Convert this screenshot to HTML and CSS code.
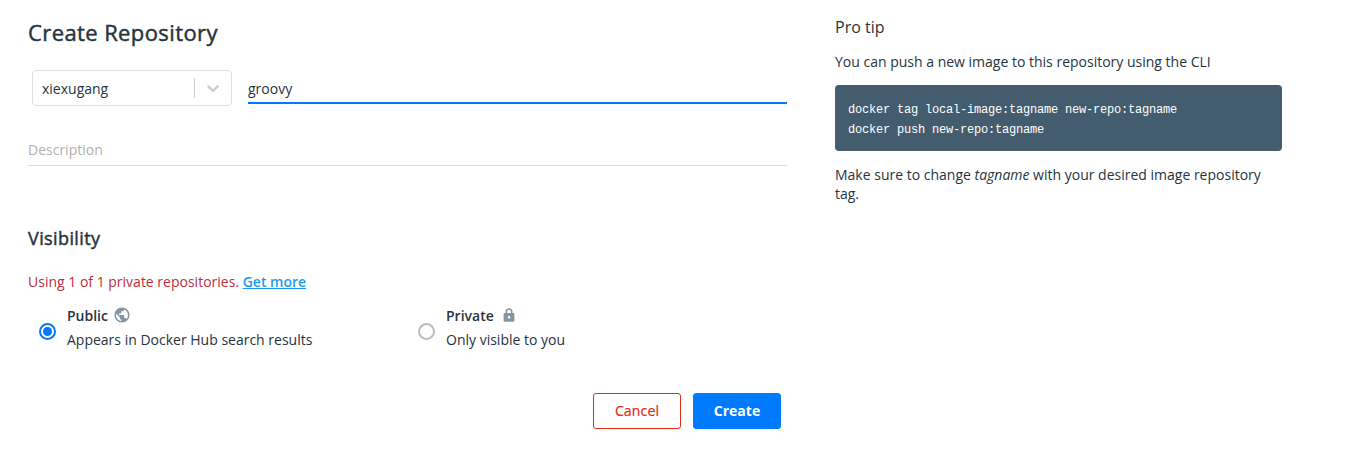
FILE: index.html
```html
<!DOCTYPE html>
<html lang="en">
<head>
<meta charset="utf-8">
<title>Create Repository</title>
<link rel="stylesheet" href="styles.css">
</head>
<body>
<div class="page">
  <main class="form">
    <h1 class="title">Create Repository</h1>
    <div class="name-row">
      <div class="select">
        <span class="select-value">xiexugang</span>
        <span class="select-divider"></span>
        <svg class="chevron" width="20" height="20" viewBox="0 0 20 20"><path fill="#ccc" d="M4.516 7.548c0.436-0.446 1.043-0.481 1.576 0l3.908 3.747 3.908-3.747c0.533-0.481 1.141-0.446 1.574 0 0.436 0.445 0.408 1.197 0 1.615-0.406 0.418-4.695 4.502-4.695 4.502-0.217 0.223-0.502 0.335-0.787 0.335s-0.57-0.112-0.789-0.335c0 0-4.287-4.084-4.695-4.502s-0.436-1.17 0-1.615z"/></svg>
      </div>
      <div class="name-field">groovy</div>
    </div>
    <div class="description">Description</div>
    <h2 class="subtitle">Visibility</h2>
    <p class="usage">Using 1 of 1 private repositories. <a class="link">Get more</a></p>
    <div class="options">
      <div class="option">
        <span class="radio radio-checked"></span>
        <div class="option-text">
          <div class="option-name">Public
            <svg class="globe" width="18" height="18" viewBox="0 0 24 24"><path fill="#8596a1" d="M12 2C6.48 2 2 6.48 2 12s4.48 10 10 10 10-4.48 10-10S17.52 2 12 2zm-1 17.93c-3.95-.49-7-3.85-7-7.93 0-.62.08-1.21.21-1.79L9 15v1c0 1.1.9 2 2 2v1.93zm6.9-2.54c-.26-.81-1-1.39-1.9-1.39h-1v-3c0-.55-.45-1-1-1H8v-2h2c.55 0 1-.45 1-1V7h2c1.1 0 2-.9 2-2v-.41c2.93 1.19 5 4.06 5 7.41 0 2.08-.8 3.97-2.1 5.39z"/></svg>
          </div>
          <div>Appears in Docker Hub search results</div>
        </div>
      </div>
      <div class="option">
        <span class="radio"></span>
        <div class="option-text">
          <div class="option-name">Private
            <svg class="lock" width="16" height="16" viewBox="0 0 16 16"><path d="M5.300 7V4.700a2.700 2.700 0 0 1 5.400 0V7" fill="none" stroke="#8596a1" stroke-width="1.600"/><path fill="#8596a1" fill-rule="evenodd" d="M3.800 6h8.400a1.200 1.200 0 0 1 1.200 1.200v6.300a1.200 1.200 0 0 1-1.200 1.200H3.800a1.200 1.200 0 0 1-1.200-1.200V7.200A1.200 1.200 0 0 1 3.800 6zM8 9a1.250 1.250 0 1 0 0 2.500A1.250 1.250 0 0 0 8 9z"/></svg>
          </div>
          <div>Only visible to you</div>
        </div>
      </div>
    </div>
    <div class="actions">
      <button class="button cancel">Cancel</button>
      <button class="button create">Create</button>
    </div>
  </main>
  <aside class="tip">
    <h3 class="tip-title">Pro tip</h3>
    <p class="tip-text">You can push a new image to this repository using the CLI</p>
    <pre class="code">docker tag local-image:tagname new-repo:tagname
docker push new-repo:tagname</pre>
    <p class="tip-text">Make sure to change <em>tagname</em> with your desired image repository tag.</p>
  </aside>
</div>
</body>
</html>
```
FILE: styles.css
```css
* { box-sizing: border-box; }
body {
  margin: 0;
  background: #fff;
  color: #27343d;
  font: 14px/20px "Open Sans", sans-serif;
}
h1, h2, h3, p, pre { margin: 0; }
.page {
  display: flex;
  gap: 48px;
  padding: 17px 0 0 28px;
}
.form { width: 759px; }
.title {
  font-size: 22px;
  line-height: 30px;
  font-weight: 400;
  letter-spacing: 0.4px;
  -webkit-text-stroke: 0.45px currentColor;
}
.name-row {
  display: flex;
  gap: 16px;
  margin-top: 23px;
  padding-left: 4px;
}
.select {
  display: flex;
  align-items: center;
  width: 200px;
  height: 36px;
  padding: 0 8px 0 9px;
  border: 1px solid #e1e2e6;
  border-radius: 4px;
}
.select-value { flex: 1; padding-top: 1px; }
.select-divider { width: 1px; height: 20px; margin-right: 8px; background: #ccc; }
.name-field {
  flex: 1;
  height: 34px;
  padding-top: 9px;
  border-bottom: 2px solid #007bff;
}
.description {
  margin-top: 28px;
  height: 32px;
  padding-top: 6px;
  color: #b1b1b1;
  border-bottom: 1px solid #dcdcdc;
}
.subtitle {
  margin-top: 60px;
  font-size: 18px;
  line-height: 24px;
  font-weight: 400;
  letter-spacing: 0.4px;
  -webkit-text-stroke: 0.45px currentColor;
}
.usage { margin-top: 22px; color: #bc2f3d; }
.link { color: #1d9bf0; font-weight: 600; text-decoration: underline; }
.options { display: flex; margin-top: 12px; padding-left: 11px; }
.option { display: flex; flex: none; width: 379px; align-items: center; gap: 11px; }
.option:last-child { width: auto; }
.option-text { line-height: 24px; }
.option-name { display: flex; align-items: center; font-weight: 600; }
.globe { margin: -2px 0 0 5px; }
.lock { margin: -3px 0 0 7px; }
.radio {
  display: flex;
  flex: none;
  width: 17px;
  height: 17px;
  margin-top: 7px;
  border: 2px solid #bdbdbd;
  border-radius: 50%;
}
.radio-checked { border-color: #007bff; }
.radio-checked::before {
  content: "";
  width: 9px;
  height: 9px;
  margin: auto;
  border-radius: 50%;
  background: #007bff;
}
.actions { display: flex; justify-content: flex-end; gap: 12px; margin-top: 41px; padding-right: 6px; }
.button {
  width: 88px;
  height: 36px;
  padding: 0;
  border: 1px solid #007bff;
  border-radius: 3px;
  font: 14px/20px "Open Sans", sans-serif;
}
.cancel {
  color: #dd2c12;
  background: #fff;
  border-color: #e02c12;
  letter-spacing: 0.15px;
  -webkit-text-stroke: 0.2px currentColor;
}
.create { color: #fff; background: #007bff; font-weight: 700; }
.tip { width: 447px; }
.tip-title { font-size: 16px; line-height: 20px; font-weight: 400; }
.tip-text { margin-top: 14px; line-height: 19px; }
.tip-title + .tip-text { margin-top: 15px; }
.code {
  height: 66px;
  margin-top: 14px;
  padding: 15px 13px 11px;
  border-radius: 4px;
  background: #445d6e;
  color: #fff;
  font: 12px/20px "Liberation Mono", monospace;
  letter-spacing: -0.2px;
}
```
